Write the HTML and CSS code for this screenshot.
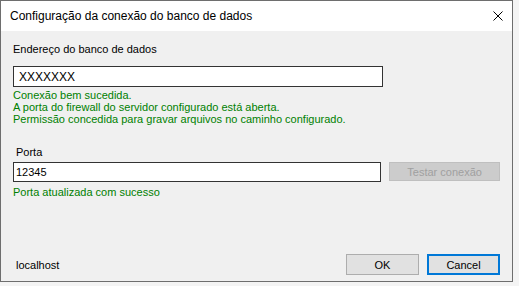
FILE: index.html
```html
<!DOCTYPE html>
<html lang="pt">
  <head>
    <meta charset="UTF-8" />
    <title>Configuração da conexão do banco de dados</title>
    <link rel="stylesheet" href="styles.css">
  </head>
  <body>
    <div class="window">
      <div class="titlebar">
        <span class="caption">Configuração da conexão do banco de dados</span>
        <svg class="close" width="10" height="10" viewBox="0 0 10 10">
          <path d="M0.5 0.5 L9.5 9.5 M9.5 0.5 L0.5 9.5" stroke="#000" stroke-width="1" fill="none" />
        </svg>
      </div>
      <div class="content">
        <label class="label first">Endereço do banco de dados</label>
        <input class="field big" type="text" value="XXXXXXX" />
        <div class="status">
          Conexão bem sucedida.<br />
          A porta do firewall do servidor configurado está aberta.<br />
          Permissão concedida para gravar arquivos no caminho configurado.
        </div>

        <label class="label port">Porta</label>
        <div class="row">
          <input class="field small" type="text" value="12345" />
          <button class="btn test" disabled>Testar conexão</button>
        </div>
        <div class="status port-status">Porta atualizada com sucesso</div>

        <div class="footer">
          <span class="host">localhost</span>
          <div class="buttons">
            <button class="btn">OK</button>
            <button class="btn default">Cancel</button>
          </div>
        </div>
      </div>
    </div>
  </body>
</html>
```

FILE: styles.css
```css
* {
  margin: 0;
  padding: 0;
  box-sizing: border-box;
}
body {
  background-color: #f4f4f4;
  font-family: "Liberation Sans", Arial, sans-serif;
  font-size: 11px;
  color: #000;
}
.window {
  width: 513px;
  height: 282px;
  border: 1px solid #6e6e6e;
  background-color: #f0f0f0;
  display: flex;
  flex-direction: column;
}
.titlebar {
  height: 30px;
  background-color: #fff;
  display: flex;
  align-items: center;
  justify-content: space-between;
  padding-left: 9px;
  padding-right: 9px;
}
.caption {
  font-size: 12px;
  color: #000;
}
.close {
  display: block;
}
.content {
  flex: 1;
  display: flex;
  flex-direction: column;
  padding: 0 12px 6px 12px;
}
.label {
  display: block;
  line-height: 14px;
}
.label.first {
  margin-top: 11px;
}
.label.port {
  margin-top: 20px;
  padding-left: 3px;
}
.field {
  height: 21px;
  border: 1px solid #333;
  background-color: #fff;
  font-family: "Liberation Sans", Arial, sans-serif;
  outline: none;
}
.field.big {
  width: 370px;
  margin-top: 10px;
  font-size: 12px;
  padding-left: 5px;
}
.status {
  color: #008000;
  line-height: 12px;
  margin-top: 2px;
}
.row {
  display: flex;
  gap: 8px;
  margin-top: 3px;
}
.field.small {
  width: 369px;
  height: 20px;
  font-size: 11px;
  padding-left: 2px;
}
.btn {
  height: 21px;
  border: 1px solid #adadad;
  background-color: #e1e1e1;
  font-family: "Liberation Sans", Arial, sans-serif;
  font-size: 11px;
  color: #000;
}
.btn.test {
  width: 111px;
  height: 19px;
  background-color: #cccccc;
  border-color: #bfbfbf;
  color: #a0a0a0;
}
.port-status {
  margin-top: 4px;
}
.footer {
  margin-top: auto;
  display: flex;
  align-items: center;
  justify-content: space-between;
}
.host {
  padding-left: 3px;
}
.buttons {
  display: flex;
  gap: 8px;
}
.buttons .btn {
  width: 73px;
}
.btn.default {
  border: 2px solid #0078d7;
}
```
